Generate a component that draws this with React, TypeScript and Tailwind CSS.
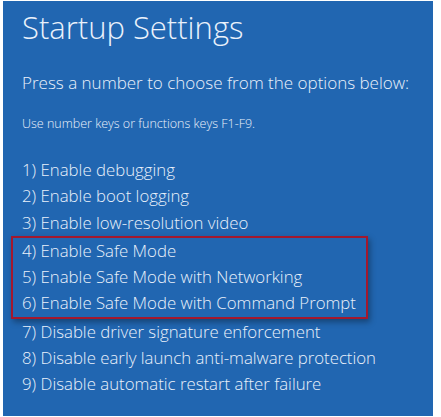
import React from 'react';

const options = [
  'Enable debugging',
  'Enable boot logging',
  'Enable low-resolution video',
  'Enable Safe Mode',
  'Enable Safe Mode with Networking',
  'Enable Safe Mode with Command Prompt',
  'Disable driver signature enforcement',
  'Disable early launch anti-malware protection',
  'Disable automatic restart after failure',
];

function Option({ n, text }: { n: number; text: string }) {
  return <div className="h-[26.25px] leading-[26.25px] whitespace-nowrap">
      {n}) {text}
    </div>;
}

export default function App() {
  return <div className="w-[441px] h-[417px] bg-white pt-[1px] pl-[3px]">
      <div className="w-[430px] h-[415px] bg-[#2166b1] text-[#eaf1fb] pl-[19px] pt-[5px] font-['Open_Sans',sans-serif] font-light">
        <h1 className="text-[31px] leading-[42px] whitespace-nowrap">Startup Settings</h1>
        <p className="mt-[23px] text-[17px] leading-[24px] whitespace-nowrap">
          Press a number to choose from the options below:
        </p>
        <p className="mt-[21px] text-[12.5px] leading-[16px] whitespace-nowrap">
          Use number keys or functions keys F1-F9.
        </p>
        <div className="mt-[25px] text-[16.8px]">
          {options.slice(0, 3).map((t, i) => <Option key={i} n={i + 1} text={t} />)}
          <div className="-ml-[11px] w-[357px] border-2 border-[#a3182e] pl-[9px] shadow-[2px_3px_6px_rgba(0,0,0,0.35)]">
            {options.slice(3, 6).map((t, i) => <Option key={i} n={i + 4} text={t} />)}
          </div>
          {options.slice(6).map((t, i) => <Option key={i} n={i + 7} text={t} />)}
        </div>
      </div>
    </div>;
}
